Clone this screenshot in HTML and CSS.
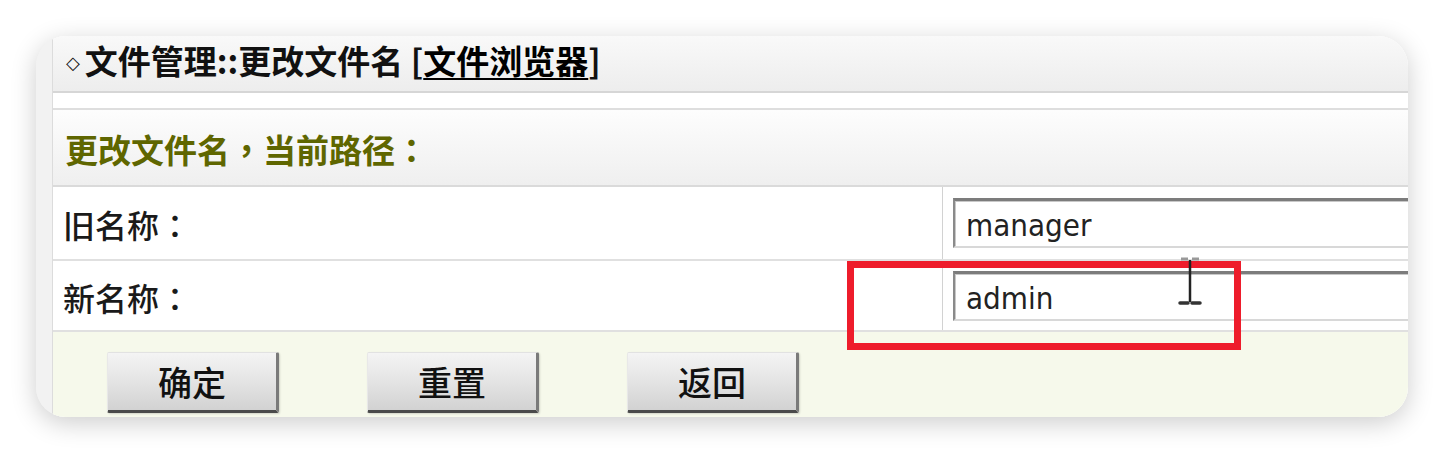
FILE: index.html
```html
<!DOCTYPE html>
<html lang="zh">
<head>
<meta charset="utf-8">
<title>更改文件名</title>
<link rel="stylesheet" href="styles.css">
</head>
<body>
<div class="card">
  <div class="strip"></div>
  <div class="main">
    <div class="titlebar">
      <span class="diamond">◇</span>文件管理::更改文件名 [<a class="link" href="#">文件浏览器</a>]
    </div>
    <div class="gap"></div>
    <div class="section">更改文件名<span class="punct">，</span>当前路径<span class="punct">：</span></div>
    <div class="row row-old">
      <div class="label">旧名称<span class="punct">：</span></div>
      <div class="field"><input class="text" type="text" value="manager" readonly></div>
    </div>
    <div class="row row-new">
      <div class="label">新名称<span class="punct">：</span></div>
      <div class="field"><input class="text" type="text" value="admin" readonly></div>
    </div>
    <div class="actions">
      <button class="btn" type="button">确定</button>
      <button class="btn" type="button">重置</button>
      <button class="btn" type="button">返回</button>
    </div>
  </div>
  <div class="highlight"></div>
  <svg class="ibeam" width="24" height="50" viewBox="0 0 24 50">
    <path d="M3 2h7M14 2h7" stroke="#999" stroke-width="3" fill="none"/>
    <path d="M12 3v42" stroke="#222" stroke-width="2.5" fill="none"/>
    <path d="M2 46h8M14 46h8" stroke="#333" stroke-width="3.5" stroke-linecap="round" fill="none"/>
  </svg>
</div>
</body>
</html>
```
FILE: styles.css
```css
html, body {
  margin: 0;
  padding: 0;
  background: #ffffff;
}

body {
  width: 1444px;
  height: 454px;
  overflow: hidden;
  font-family: "Noto Sans CJK SC", "Noto Sans", sans-serif;
}

.card {
  position: relative;
  margin: 36px 0 0 36px;
  width: 1372px;
  height: 381px;
  border-radius: 30px;
  overflow: hidden;
  background: #f3f3f3;
  box-shadow: 0 6px 26px rgba(0, 0, 0, 0.2);
  display: flex;
}

.strip {
  width: 16px;
  flex: none;
  background: #f2f2f2;
}

.main {
  flex: 1;
  min-width: 0;
  display: flex;
  flex-direction: column;
  border-left: 1px solid #dcdcdc;
  background: #ffffff;
}

.titlebar {
  flex: none;
  height: 57px;
  box-sizing: border-box;
  padding: 0 0 0 13px;
  font-size: 33px;
  line-height: 48px;
  font-weight: bold;
  color: #111;
  white-space: nowrap;
  background: linear-gradient(#f9f9f9, #ededed);
  border-bottom: 2px solid #d6d6d6;
}

.diamond {
  font-family: "DejaVu Sans", sans-serif;
  font-size: 18px;
  font-weight: bold;
  vertical-align: 5px;
  margin-right: 5px;
}

.link {
  color: #000;
  text-decoration: underline;
  text-decoration-thickness: 2px;
  text-underline-offset: 4px;
}

.punct {
  font-family: "Noto Sans CJK TC", "Noto Sans CJK SC", sans-serif;
}

.gap {
  flex: none;
  height: 15px;
  background: #ffffff;
}

.section {
  flex: none;
  height: 79px;
  box-sizing: border-box;
  display: flex;
  align-items: center;
  padding: 3px 0 0 12px;
  font-size: 33px;
  font-weight: bold;
  color: #5f6600;
  background: linear-gradient(#fdfdfd, #efefef);
  border-top: 2px solid #dedede;
  border-bottom: 2px solid #dadada;
}

.row {
  flex: none;
  display: grid;
  grid-template-columns: 890px 1fr;
  box-sizing: border-box;
  border-bottom: 2px solid #e0e0e0;
  background: #ffffff;
}

.row-old {
  height: 74px;
}

.row-new {
  height: 71px;
}

.label {
  display: flex;
  align-items: center;
  padding: 2px 0 0 10px;
  font-size: 32px;
  font-weight: 500;
  color: #1a1a1a;
  border-right: 1px solid #d2d2d2;
}

.field {
  padding: 11px 0 0 10px;
  overflow: hidden;
}

.row-new .field {
  padding-top: 10px;
}

.text {
  display: block;
  width: 560px;
  height: 50px;
  box-sizing: border-box;
  margin: 0;
  padding: 2px 0 0 11px;
  border-style: solid;
  border-width: 3px 2px 2px 2px;
  border-color: #7c7c7c #e2e2e2 #d8d8d8 #8a8a8a;
  box-shadow: inset 1px 1px 0 #c8c8c8;
  background: #ffffff;
  font-family: "DejaVu Sans Condensed", "DejaVu Sans", sans-serif;
  font-stretch: condensed;
  font-size: 31px;
  color: #222;
  outline: none;
}

.actions {
  flex: 1;
  display: flex;
  gap: 88px;
  padding: 20px 0 0 54px;
  background: #f6f9eb;
}

.btn {
  flex: none;
  width: 172px;
  height: 61px;
  margin: 0;
  padding: 0;
  font-family: "Noto Sans CJK SC", sans-serif;
  font-size: 34px;
  font-weight: 500;
  color: #111;
  background: linear-gradient(#f4f4f4, #e4e4e4 50%, #d2d2d2);
  border-style: solid;
  border-width: 1px 3px 3px 1px;
  border-color: #e2e2e2 #7a7a7a #4a4a4a #e8e8e8;
  border-radius: 2px;
  box-shadow: 1px 1px 2px rgba(0, 0, 0, 0.15);
}

.highlight {
  position: absolute;
  left: 811px;
  top: 225px;
  width: 394px;
  height: 89px;
  box-sizing: border-box;
  border: 7px solid #ee1c2b;
}

.ibeam {
  position: absolute;
  left: 1142px;
  top: 221px;
}
```
